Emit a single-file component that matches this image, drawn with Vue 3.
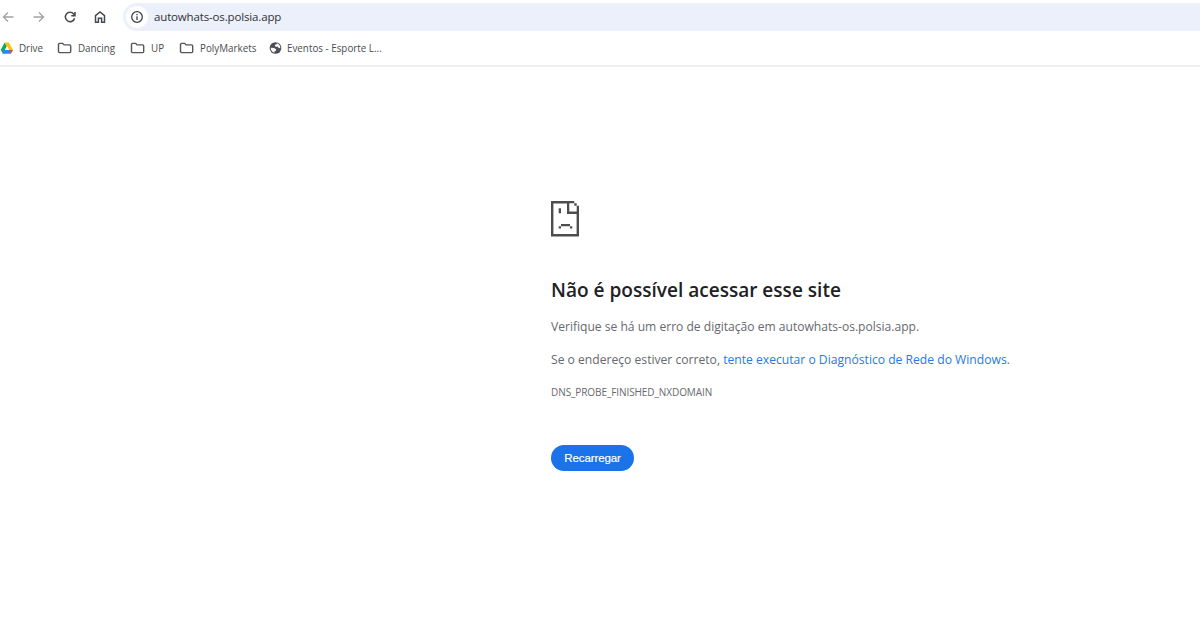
<script setup>
const bookmarks = [
  { name: 'Drive', icon: 'drive' },
  { name: 'Dancing', icon: 'folder' },
  { name: 'UP', icon: 'folder' },
  { name: 'PolyMarkets', icon: 'folder' },
  { name: 'Eventos - Esporte L...', icon: 'globe' },
]
</script>

<template>
  <div class="browser">
    <header class="toolbar">
      <nav class="controls">
        <svg class="ctl muted" viewBox="0 0 16 16"><path d="M13.5 8H3.500M8 3.500L3.500 8l4.500 4.500" /></svg>
        <svg class="ctl muted" viewBox="0 0 16 16"><path d="M2.500 8H12.500M8 3.500l4.500 4.500-4.500 4.500" /></svg>
        <svg class="ctl" viewBox="0 0 16 16"><path d="M12.600 9.200A4.700 4.700 0 1 1 11.700 5L12.800 6.200M13 3v3.700H9.300" /></svg>
        <svg class="ctl" viewBox="0 0 16 16"><path d="M3.500 6.600L8 3l4.500 3.600v6.700H9.600V9.200H6.400v4.100H3.500z" /></svg>
      </nav>
      <div class="address">
        <span class="info">
          <svg viewBox="0 0 14 14"><circle cx="7" cy="7" r="5.300" /><path d="M7 6.300v3.600M7 4v1.300" /></svg>
        </span>
        <span class="url">autowhats-os.polsia.app</span>
      </div>
    </header>
    <div class="bookmarks">
      <a v-for="b in bookmarks" :key="b.name" class="bookmark" :class="b.name.split(' ')[0].toLowerCase()">
        <svg v-if="b.icon === 'drive'" class="ico drive-ico" viewBox="0 0 14 14">
          <path fill="#10a957" d="M4.600 1.600L7 5.300 3 12.500.7 9z" />
          <path fill="#ffc107" d="M4.600 1.600h4.200L13 9H9.200z" />
          <path fill="#2684fc" d="M3.300 9h6.500l1.400 3.700H2.500z" />
          <path fill="#ea4335" d="M9.400 9H13l-2 3.500z" />
          <path fill="#fff" d="M6.900 5.300L9.100 9H4.800z" />
        </svg>
        <svg v-else-if="b.icon === 'folder'" class="ico folder" viewBox="0 0 15 14">
          <path d="M1.500 3.500q0-1.100 1.100-1.100h3.100L7 3.900h5.600q1.100 0 1.100 1.100v5.500q0 1.100-1.100 1.100h-10q-1.100 0-1.100-1.100z" />
        </svg>
        <svg v-else class="ico globe" viewBox="0 0 14 14">
          <circle cx="7" cy="7" r="6.300" fill="#4b4f54" />
          <path fill="#fff" d="M8.500 1.900Q12.200 3.200 12.200 7.200L10.400 7 9.700 5.600H7.300L6.200 4.700 6.600 3.400 8.300 3zM1.800 6.700L5.800 6.900 7.800 8.600 7.600 9.900 6 10.200 5.800 12.100Q2 11 1.800 6.700z" />
        </svg>
        <span>{{ b.name }}</span>
      </a>
    </div>
    <main class="error">
      <svg class="sad" viewBox="0 0 28 36">
        <path d="M0 0H23.300V2.300H18.300V10.500H25.700V4.700H28V35.500H0zM2.400 2.400V33.100H25.600V12.900H16V2.400zM23.300 2.300h2.400v2.400h-2.400zM7.700 7.200h2.300v5.100H7.700zM10 23h9v2.300h-9zM7.700 25.200h2.300v2.400H7.700zM19 25.200h2.300v2.400H19z" />
      </svg>
      <h1>Não é possível acessar esse site</h1>
      <p class="check">Verifique se há um erro de digitação em autowhats-os.polsia.app.</p>
      <p class="hint">Se o endereço estiver correto, <a>tente executar o Diagnóstico de Rede do Windows</a>.</p>
      <div class="code">DNS_PROBE_FINISHED_NXDOMAIN</div>
      <button>Recarregar</button>
    </main>
  </div>
</template>

<style>
body { background: #fff; }
</style>

<style scoped>
.browser {
  height: 634px;
  overflow: hidden;
  background: #fff;
  font-family: "Open Sans", "Noto Sans", sans-serif;
}
.toolbar { display: flex; height: 31px; padding-top: 3px; box-sizing: border-box; }
.controls { display: flex; gap: 14.800px; width: 123px; align-items: center; flex: none; }
.ctl {
  width: 16px;
  height: 16px;
  flex: none;
  fill: none;
  stroke: #45484c;
  stroke-width: 1.500;
}
.ctl.muted { stroke: #a0a2a5; stroke-width: 1.300; }
.address {
  flex: 1;
  display: flex;
  align-items: center;
  height: 28px;
  padding-left: 3px;
  background: #ebf0fa;
  border-radius: 14px 0 0 14px;
}
.info {
  width: 22px;
  height: 22px;
  border-radius: 50%;
  background: #fff;
  display: flex;
  align-items: center;
  justify-content: center;
}
.info svg { width: 14px; height: 14px; fill: none; stroke: #3c4043; stroke-width: 1.300; }
.url { margin-left: 6px; font-size: 11.500px; line-height: 20px; letter-spacing: -0.150px; color: #303236; }
.bookmarks {
  display: flex;
  align-items: center;
  height: 36px;
  box-sizing: border-box;
  border-bottom: 2px solid #eeeff0;
}
.bookmark {
  display: flex;
  align-items: center;
  gap: 5px;
  color: #494c50;
  font-size: 10.500px;
  line-height: 16px;
  white-space: nowrap;
}
.bookmark span { transform: scaleX(0.935); transform-origin: left; }
.drive { width: 57px; }
.dancing { width: 73px; }
.up { width: 49px; }
.polymarkets { width: 90px; }
.dancing, .up, .polymarkets { gap: 6px; }
.ico { width: 15px; height: 14px; flex: none; }
.drive-ico { width: 14px; }
.globe { width: 13px; }
.folder { fill: none; stroke: #53565a; stroke-width: 1.400; }
.error { padding: 134px 0 0 551px; color: #66696d; }
.sad { display: block; width: 28px; height: 36px; fill: #4d4d4d; }
h1, p { transform-origin: left; white-space: nowrap; }
h1 {
  margin: 39px 0 0;
  font-size: 20px;
  font-weight: 600;
  line-height: 28px;
  color: #202124;
  transform: scaleX(0.952);
}
p { margin: 0; font-size: 12.750px; line-height: 20px; }
.check { margin-top: 12px; transform: scaleX(0.947); }
.hint { margin-top: 13px; transform: scaleX(0.951); }
.hint a { color: #2878e8; }
.code { margin-top: 15px; font-size: 10px; line-height: 16px; letter-spacing: -0.080px; }
button {
  display: block;
  width: 83px;
  height: 26px;
  margin-top: 45px;
  padding: 0;
  border: 0;
  border-radius: 13px;
  background: #1a73e8;
  color: #fff;
  font: 400 11.500px/26px "Liberation Sans", sans-serif;
  letter-spacing: -0.100px;
  -webkit-text-stroke: 0.200px #fff;
}
</style>
